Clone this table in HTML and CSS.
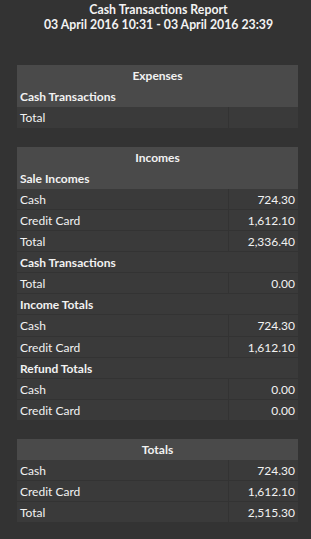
FILE: index.html
```html
<!DOCTYPE html>
<html>
<head>
<meta charset="utf-8">
<link rel="stylesheet" href="styles.css">
</head>
<body>
<div class="report">
  <header class="report-title">
    <div>Cash Transactions Report</div>
    <div>03 April 2016 10:31 - 03 April 2016 23:39</div>
  </header>

  <table class="tbl">
    <colgroup><col class="col-label"><col class="col-value"></colgroup>
    <thead>
      <tr><th colspan="2" class="center">Expenses</th></tr>
      <tr><th colspan="2">Cash Transactions</th></tr>
    </thead>
    <tbody>
      <tr><td>Total</td><td class="num"></td></tr>
    </tbody>
  </table>

  <table class="tbl">
    <colgroup><col class="col-label"><col class="col-value"></colgroup>
    <thead>
      <tr><th colspan="2" class="center">Incomes</th></tr>
      <tr><th colspan="2">Sale Incomes</th></tr>
    </thead>
    <tbody>
      <tr><td>Cash</td><td class="num">724.30</td></tr>
      <tr><td>Credit Card</td><td class="num">1,612.10</td></tr>
      <tr><td>Total</td><td class="num">2,336.40</td></tr>
      <tr><td colspan="2" class="sub">Cash Transactions</td></tr>
      <tr><td>Total</td><td class="num">0.00</td></tr>
      <tr><td colspan="2" class="sub">Income Totals</td></tr>
      <tr><td>Cash</td><td class="num">724.30</td></tr>
      <tr><td>Credit Card</td><td class="num">1,612.10</td></tr>
      <tr><td colspan="2" class="sub">Refund Totals</td></tr>
      <tr><td>Cash</td><td class="num">0.00</td></tr>
      <tr><td>Credit Card</td><td class="num">0.00</td></tr>
    </tbody>
  </table>

  <table class="tbl">
    <colgroup><col class="col-label"><col class="col-value"></colgroup>
    <thead>
      <tr><th colspan="2" class="center">Totals</th></tr>
    </thead>
    <tbody>
      <tr><td>Cash</td><td class="num">724.30</td></tr>
      <tr><td>Credit Card</td><td class="num">1,612.10</td></tr>
      <tr><td>Total</td><td class="num">2,515.30</td></tr>
    </tbody>
  </table>
</div>
</body>
</html>
```

FILE: styles.css
```css
html, body {
  margin: 0;
  padding: 0;
  background: #333333;
}
body {
  font-family: Lato, "Open Sans", sans-serif;
  font-size: 12px;
  color: #f2f2f2;
}
.report {
  padding: 2px 13px 0 17px;
}
.report-title {
  text-align: center;
  font-weight: bold;
  font-size: 12.3px;
  line-height: 15px;
  margin-bottom: 33px;
  padding-left: 2px;
}
.tbl {
  width: 281px;
  border-collapse: collapse;
  margin-bottom: 18px;
  table-layout: fixed;
}
.col-label {
  width: 211px;
}
.col-value {
  width: 70px;
}
.tbl th {
  background: #4a4a4a;
  text-align: left;
  font-weight: bold;
  padding: 2px 3px;
  line-height: 17.2px;
}
.tbl th.center {
  text-align: center;
}
.tbl td {
  background: #3a3a3a;
  padding: 3px 3px 1px;
  line-height: 16.1px;
  border-bottom: 1px solid #333333;
}
.tbl td.num {
  text-align: right;
  border-left: 1px solid #333333;
}
.tbl td.sub {
  font-weight: bold;
}
```
